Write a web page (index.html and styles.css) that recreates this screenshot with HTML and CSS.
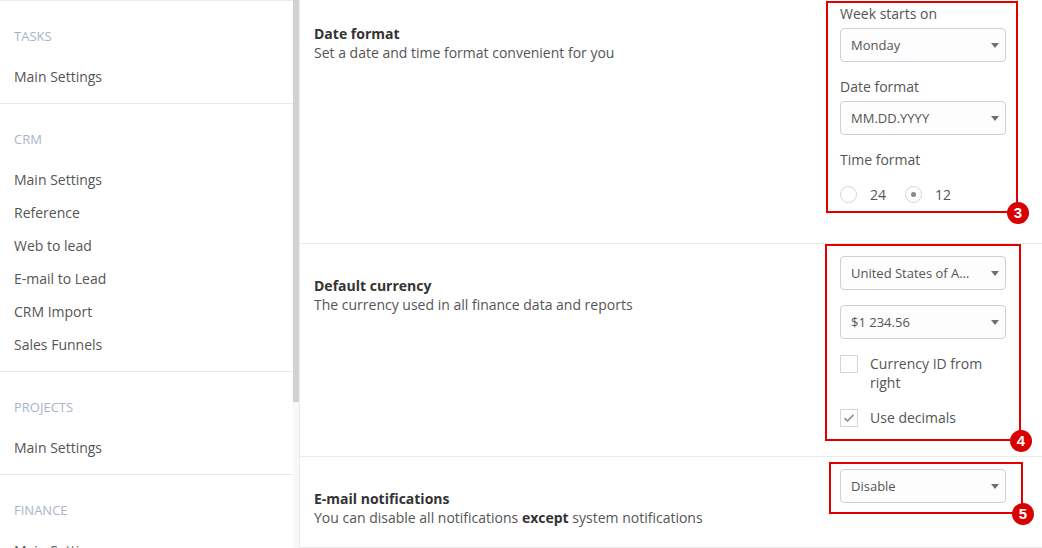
FILE: index.html
```html
<!DOCTYPE html>
<html lang="en">

<head>
    <meta charset="UTF-8">
    <meta name="viewport" content="width=device-width, initial-scale=1.0">
    <title>Settings</title>
    <link rel="stylesheet" href="styles.css">
</head>

<body>
    <div class="page">
        <aside class="sidebar">
            <nav class="nav">
                <section class="nav-group">
                    <h4 class="nav-title">Tasks</h4>
                    <a class="nav-link" href="#">Main Settings</a>
                </section>
                <section class="nav-group">
                    <h4 class="nav-title">CRM</h4>
                    <a class="nav-link" href="#">Main Settings</a>
                    <a class="nav-link" href="#">Reference</a>
                    <a class="nav-link" href="#">Web to lead</a>
                    <a class="nav-link" href="#">E-mail to Lead</a>
                    <a class="nav-link" href="#">CRM Import</a>
                    <a class="nav-link" href="#">Sales Funnels</a>
                </section>
                <section class="nav-group">
                    <h4 class="nav-title">Projects</h4>
                    <a class="nav-link" href="#">Main Settings</a>
                </section>
                <section class="nav-group">
                    <h4 class="nav-title">Finance</h4>
                    <a class="nav-link" href="#">Main Settings</a>
                    <a class="nav-link" href="#">Categories</a>
                    <a class="nav-link" href="#">Accounts</a>
                </section>
            </nav>
            <div class="scrollbar">
                <div class="scrollbar-thumb"></div>
            </div>
        </aside>

        <main class="content">
            <section class="panel">
                <div class="info">
                    <h3 class="info-title">Date format</h3>
                    <p class="info-text">Set a date and time format convenient for you</p>
                </div>
                <div class="controls">
                    <div class="field">
                        <label class="field-label">Week starts on</label>
                        <div class="select"><span>Monday</span></div>
                    </div>
                    <div class="field">
                        <label class="field-label">Date format</label>
                        <div class="select"><span>MM.DD.YYYY</span></div>
                    </div>
                    <div class="field">
                        <label class="field-label">Time format</label>
                        <div class="radios">
                            <span class="radio"></span><span class="radio-text">24</span>
                            <span class="radio checked"></span><span class="radio-text">12</span>
                        </div>
                    </div>
                    <div class="mark mark-3"><span class="badge">3</span></div>
                </div>
            </section>

            <section class="panel">
                <div class="info">
                    <h3 class="info-title">Default currency</h3>
                    <p class="info-text">The currency used in all finance data and reports</p>
                </div>
                <div class="controls">
                    <div class="select"><span>United States of America dollar</span></div>
                    <div class="select"><span>$1 234.56</span></div>
                    <div class="check">
                        <span class="box"></span>
                        <span class="check-text">Currency ID from right</span>
                    </div>
                    <div class="check">
                        <span class="box">
                            <svg width="12" height="10" viewBox="0 0 12 10">
                                <path d="M1.5 5.2 L4.5 8 L10.5 1.8" fill="none" stroke="#8a8a8a" stroke-width="1.6" />
                            </svg>
                        </span>
                        <span class="check-text">Use decimals</span>
                    </div>
                    <div class="mark mark-4"><span class="badge">4</span></div>
                </div>
            </section>

            <section class="panel">
                <div class="info">
                    <h3 class="info-title">E-mail notifications</h3>
                    <p class="info-text">You can disable all notifications <b>except</b> system notifications</p>
                </div>
                <div class="controls">
                    <div class="select"><span>Disable</span></div>
                    <div class="mark mark-5"><span class="badge">5</span></div>
                </div>
            </section>
        </main>
    </div>
</body>

</html>
```

FILE: styles.css
```css
html,
body {
    margin: 0px;
    padding: 0px;
    height: 100%;
}

body {
    background-color: #ffffff;
    color: #555555;
    font-family: "Open Sans", "Liberation Sans", sans-serif;
    font-size: 14px;
    overflow: hidden;
}

.page {
    display: flex;
    height: 548px;
    overflow: hidden;
}

/* sidebar */

.sidebar {
    display: flex;
    flex-shrink: 0;
    height: 548px;
}

.nav {
    width: 293px;
    border-top: 1px solid #ececec;
    overflow: hidden;
}

.scrollbar {
    width: 6px;
    background-color: #f8f8f8;
}

.scrollbar-thumb {
    height: 402px;
    background-color: #d2d2d2;
}

.nav-group {
    padding-bottom: 10px;
    border-bottom: 1px solid #e9e9e9;
}

.nav-title {
    margin: 25px 0px 14px;
    padding: 0px 14px;
    line-height: 20px;
    font-size: 13px;
    font-weight: normal;
    text-transform: uppercase;
    color: #aab4c7;
}

.nav-link {
    display: block;
    padding: 0px 14px;
    line-height: 33px;
    color: #555555;
    text-decoration: none;
}

/* content */

.content {
    flex: 1;
    margin-top: -8px;
    border-left: 1px solid #ebebeb;
}

.panel {
    display: flex;
    padding: 12px 36px 14px 14px;
    border-bottom: 1px solid #ebebeb;
}

.info {
    flex: 1;
    padding: 20px 0px 6px;
}

.info-title {
    margin: 0px;
    line-height: 19px;
    font-size: 14px;
    font-weight: bold;
    color: #333333;
}

.info-text {
    margin: 0px;
    line-height: 19px;
    color: #555555;
}

.info-text b {
    color: #333333;
}

.controls {
    position: relative;
    width: 166px;
}

.field {
    margin-bottom: 15px;
}

.field-label {
    display: block;
    margin-bottom: 4px;
    line-height: 20px;
    color: #555555;
}

.select {
    position: relative;
    box-sizing: border-box;
    height: 34px;
    margin-bottom: 15px;
    padding: 0px 26px 0px 10px;
    border: 1px solid #c9d1dd;
    border-radius: 4px;
    background-color: #fdfdfd;
    line-height: 32px;
    font-size: 13px;
    color: #555555;
    white-space: nowrap;
}

.field .select {
    margin-bottom: 0px;
}

.select span {
    display: block;
    overflow: hidden;
    text-overflow: ellipsis;
}

.select::after {
    content: "";
    position: absolute;
    top: 14px;
    right: 6px;
    border-left: 4px solid transparent;
    border-right: 4px solid transparent;
    border-top: 5px solid #707070;
}

.radios {
    display: flex;
    align-items: center;
    height: 40px;
}

.radio {
    position: relative;
    box-sizing: border-box;
    width: 17px;
    height: 17px;
    border: 1px solid #d4d4d4;
    border-radius: 50%;
}

.radio.checked::after {
    content: "";
    position: absolute;
    top: 5px;
    left: 5px;
    width: 5px;
    height: 5px;
    border-radius: 50%;
    background-color: #8a8a8a;
}

.radio-text {
    margin: 0px 19px 0px 13px;
    color: #555555;
}

.check {
    display: flex;
    align-items: flex-start;
    margin-bottom: 15.5px;
    line-height: 19px;
}

.box {
    box-sizing: border-box;
    flex-shrink: 0;
    display: flex;
    align-items: center;
    justify-content: center;
    width: 18px;
    height: 18px;
    margin-top: 1px;
    margin-right: 12px;
    border: 1px solid #d6d6d6;
}

.check-text {
    color: #555555;
}

/* annotations */

.mark {
    position: absolute;
    border: 2px solid #e00000;
}

.mark-3 {
    top: -3px;
    left: -14px;
    width: 188px;
    height: 208px;
}

.mark-4 {
    top: -12px;
    left: -15px;
    width: 192px;
    height: 193px;
}

.mark-5 {
    top: -7px;
    left: -11px;
    width: 190px;
    height: 48px;
}

.badge {
    position: absolute;
    right: -13px;
    bottom: -13px;
    width: 22px;
    height: 22px;
    border-radius: 50%;
    background-color: #d80000;
    color: #ffffff;
    font-family: "Liberation Sans", sans-serif;
    font-size: 15px;
    font-weight: bold;
    line-height: 22px;
    text-align: center;
}
```
